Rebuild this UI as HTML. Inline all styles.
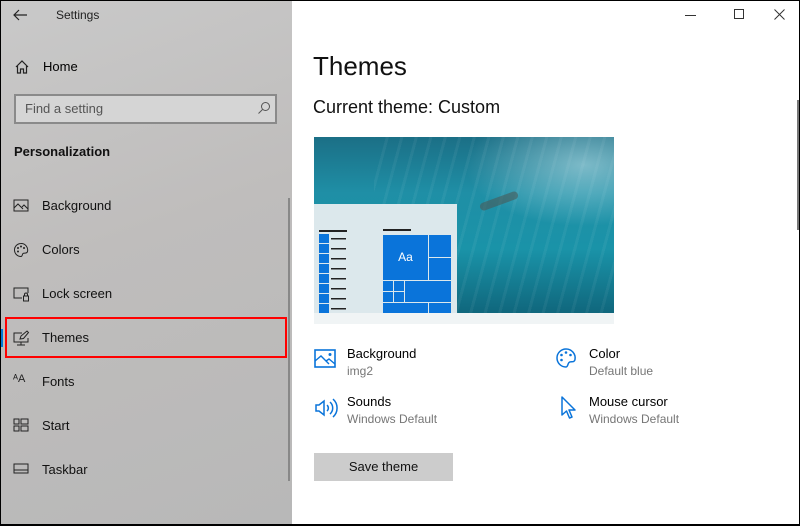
<!DOCTYPE html>
<html><head><meta charset="utf-8"><style>
*{margin:0;padding:0;box-sizing:border-box}
body{width:800px;height:526px;overflow:hidden;font-family:"Liberation Sans",sans-serif;position:relative;background:#fff}
.frame{position:absolute;inset:0;border:1px solid #000;border-bottom:2px solid #000;z-index:10;pointer-events:none}
.side{position:absolute;left:0;top:0;width:292px;height:526px;background:linear-gradient(160deg,#c9c9c9,#bfbdbc 45%,#b8b8b8)}
.t{position:absolute;white-space:nowrap;color:#000}
.item{position:absolute;left:42px;font-size:13px;color:#111}
.ic{position:absolute;left:13px}
.t.sub{color:#767676;font-size:12px}
</style></head><body>
<div class="side">
  <svg class="ic" style="left:12px;top:8px" width="16" height="14" viewBox="0 0 16 14"><path d="M15 7H2M7 2L2 7l5 5" stroke="#222" stroke-width="1.2" fill="none"/></svg>
  <div class="t" style="left:56px;top:8px;font-size:12px;color:#222">Settings</div>
  <svg class="ic" style="left:14px;top:59px" width="16" height="16" viewBox="0 0 16 16"><path d="M2 8L8 2l6 6M3.5 7v7h3v-4h3v4h3V7" stroke="#222" stroke-width="1.2" fill="none"/></svg>
  <div class="t" style="left:43px;top:59px;font-size:13px">Home</div>
  <div style="position:absolute;left:14px;top:94px;width:263px;height:30px;border:2px solid #8a8a8a;background:#d5d5d5"></div>
  <div class="t" style="left:25px;top:101px;font-size:13px;color:#555">Find a setting</div>
  <svg style="position:absolute;left:257px;top:101px" width="14" height="14" viewBox="0 0 14 14"><circle cx="8.5" cy="5.5" r="4" stroke="#555" fill="none"/><path d="M5.5 8.5L1.5 12.5" stroke="#555"/></svg>
  <div class="t" style="left:14px;top:144px;font-size:13px;font-weight:bold;color:#111">Personalization</div>

  <svg class="ic" style="top:199px" width="16" height="14" viewBox="0 0 16 14"><rect x="1" y="1" width="14" height="11" stroke="#222" fill="none"/><path d="M1 9l4-4 5 5M9 8l2-2 4 4" stroke="#222" fill="none"/></svg>
  <div class="item" style="top:198px">Background</div>
  <svg class="ic" style="top:242px" width="16" height="16" viewBox="0 0 16 16"><path d="M8 1.5a6.5 6.5 0 1 0 0 13c1.5 0 1-2 2-3s4 .5 4.5-2A6.5 6.5 0 0 0 8 1.5z" stroke="#222" fill="none"/><circle cx="5" cy="6" r="1" fill="#222"/><circle cx="8" cy="4.5" r="1" fill="#222"/><circle cx="11" cy="6" r="1" fill="#222"/><circle cx="5" cy="9.5" r="1" fill="#222"/></svg>
  <div class="item" style="top:242px">Colors</div>
  <svg class="ic" style="top:286px" width="17" height="16" viewBox="0 0 17 16"><path d="M9 12H1V2h14v5" stroke="#222" fill="none"/><rect x="10.5" y="10" width="5" height="5" stroke="#222" fill="none"/><path d="M11.5 10V8.5a1.5 1.5 0 0 1 3 0V10" stroke="#222" fill="none"/></svg>
  <div class="item" style="top:286px">Lock screen</div>
  <div style="position:absolute;left:1px;top:329px;width:2px;height:18px;background:#0078d7"></div>
  <svg class="ic" style="top:330px" width="17" height="16" viewBox="0 0 17 16"><path d="M9 3H1v9h14V8M4 15h8M8 12v3" stroke="#222" fill="none"/><path d="M7 9l1-3 6-5 1.5 1.5-5 6z" stroke="#222" fill="none"/></svg>
  <div class="item" style="top:330px">Themes</div>
  <div class="t" style="left:13px;top:373px;font-size:11px;color:#222">ᴬA</div>
  <div class="item" style="top:374px">Fonts</div>
  <svg class="ic" style="top:418px" width="16" height="14" viewBox="0 0 16 14"><rect x="1" y="1" width="5" height="5" stroke="#222" fill="none"/><rect x="8" y="1" width="7" height="5" stroke="#222" fill="none"/><rect x="1" y="8" width="5" height="5" stroke="#222" fill="none"/><rect x="8" y="8" width="7" height="5" stroke="#222" fill="none"/></svg>
  <div class="item" style="top:418px">Start</div>
  <svg class="ic" style="top:463px" width="16" height="12" viewBox="0 0 16 12"><rect x="1" y="1" width="14" height="9" stroke="#222" fill="none"/><path d="M1 7h14" stroke="#222"/></svg>
  <div class="item" style="top:462px">Taskbar</div>
  <div style="position:absolute;left:5px;top:317px;width:282px;height:41px;border:2px solid #f00"></div>
  <div style="position:absolute;left:288px;top:198px;width:2px;height:283px;background:#888"></div>
</div>

<div class="main">
  <div style="position:absolute;left:685px;top:15px;width:11px;height:1px;background:#333"></div>
  <div style="position:absolute;left:734px;top:9px;width:10px;height:10px;border:1px solid #333"></div>
  <svg style="position:absolute;left:774px;top:9px" width="11" height="11" viewBox="0 0 11 11"><path d="M0.5 0.5l10 10M10.5 0.5l-10 10" stroke="#333"/></svg>
  <div style="position:absolute;left:797px;top:100px;width:2px;height:130px;background:#777"></div>

  <div class="t" style="left:313px;top:51px;font-size:26px;color:#111">Themes</div>
  <div class="t" style="left:313px;top:97px;font-size:18px;color:#111">Current theme: Custom</div>

  <div style="position:absolute;left:314px;top:137px;width:300px;height:187px;overflow:hidden;background:linear-gradient(180deg,#1b6f86 0%,#1f8fa6 30%,#1a93a8 60%,#0e5f75 100%)">
    <div style="position:absolute;left:60px;top:-10px;width:260px;height:200px;background:repeating-linear-gradient(105deg,rgba(255,255,255,.05) 0 3px,transparent 3px 14px)"></div>
    <div style="position:absolute;left:130px;top:-20px;width:200px;height:120px;background:radial-gradient(ellipse at 70% 40%,rgba(220,245,250,.5),rgba(255,255,255,0) 60%)"></div>
    <div style="position:absolute;left:165px;top:60px;width:40px;height:8px;background:#4a5a58;transform:rotate(-20deg);border-radius:4px;opacity:.6"></div>
    <div style="position:absolute;left:0;top:176px;width:300px;height:11px;background:#f0f4f5"></div>
    <div style="position:absolute;left:0;top:67px;width:143px;height:109px;background:#dce8ec">
      <div style="position:absolute;left:5px;top:26px;width:28px;height:2px;background:#222"></div>
      <div style="position:absolute;left:69px;top:25px;width:28px;height:2px;background:#222"></div>
      <div style="position:absolute;left:5px;top:30px;width:10px;height:79px;background:repeating-linear-gradient(#0a74da 0 9px,#dce8ec 9px 10px)"></div>
      <div style="position:absolute;left:17px;top:34px;width:15px;height:72px;background:repeating-linear-gradient(#222 0 1.5px,transparent 1.5px 10px)"></div>
      <div style="position:absolute;left:69px;top:31px;width:45px;height:45px;background:#0a74da;color:#fff;font-size:12px;text-align:center;line-height:45px">Aa</div>
      <div style="position:absolute;left:115px;top:31px;width:22px;height:22px;background:#0a74da"></div>
      <div style="position:absolute;left:115px;top:54px;width:22px;height:22px;background:#0a74da"></div>
      <div style="position:absolute;left:69px;top:77px;width:10px;height:10px;background:#0a74da"></div>
      <div style="position:absolute;left:80px;top:77px;width:10px;height:10px;background:#0a74da"></div>
      <div style="position:absolute;left:69px;top:88px;width:10px;height:10px;background:#0a74da"></div>
      <div style="position:absolute;left:80px;top:88px;width:10px;height:10px;background:#0a74da"></div>
      <div style="position:absolute;left:91px;top:77px;width:46px;height:21px;background:#0a74da"></div>
      <div style="position:absolute;left:69px;top:99px;width:45px;height:10px;background:#0a74da"></div>
      <div style="position:absolute;left:115px;top:99px;width:22px;height:10px;background:#0a74da"></div>
    </div>
  </div>

  <svg style="position:absolute;left:314px;top:349px" width="22" height="20" viewBox="0 0 22 20"><rect x="1" y="1" width="20" height="17" stroke="#0a74da" stroke-width="1.6" fill="none"/><path d="M1 12l6-5 8 8M12 12l3-2 6 5" stroke="#0a74da" stroke-width="1.4" fill="none"/><circle cx="16" cy="5.5" r="1.5" fill="#0a74da"/></svg>
  <div class="t" style="left:347px;top:346px;font-size:13px">Background</div>
  <div class="t sub" style="left:347px;top:364px">img2</div>
  <svg style="position:absolute;left:555px;top:347px" width="22" height="22" viewBox="0 0 22 22"><path d="M11 2a9 9 0 1 0 0 18c2 0 1.5-3 3-4.5s5.5.5 6-3A9 9 0 0 0 11 2z" stroke="#0a74da" stroke-width="1.5" fill="none"/><circle cx="6.5" cy="8" r="1.3" fill="#0a74da"/><circle cx="11" cy="5.5" r="1.3" fill="#0a74da"/><circle cx="15.5" cy="8" r="1.3" fill="#0a74da"/><circle cx="6.5" cy="13" r="1.3" fill="#0a74da"/></svg>
  <div class="t" style="left:589px;top:346px;font-size:13px">Color</div>
  <div class="t sub" style="left:589px;top:364px">Default blue</div>
  <svg style="position:absolute;left:314px;top:397px" width="24" height="22" viewBox="0 0 24 22"><path d="M2 8h3l5-4v14l-5-4H2z" stroke="#0a74da" stroke-width="1.5" fill="none"/><path d="M13 8a4 4 0 0 1 0 6M16 5a8 8 0 0 1 0 12M19 2a12 12 0 0 1 0 18" stroke="#0a74da" stroke-width="1.5" fill="none"/></svg>
  <div class="t" style="left:347px;top:394px;font-size:13px">Sounds</div>
  <div class="t sub" style="left:347px;top:412px">Windows Default</div>
  <svg style="position:absolute;left:560px;top:396px" width="18" height="24" viewBox="0 0 18 24"><path d="M2 1v18l4.5-4 3 7 2.5-1-3-7H15z" stroke="#0a74da" stroke-width="1.5" fill="none" stroke-linejoin="round"/></svg>
  <div class="t" style="left:589px;top:394px;font-size:13px">Mouse cursor</div>
  <div class="t sub" style="left:589px;top:412px">Windows Default</div>

  <div style="position:absolute;left:314px;top:453px;width:139px;height:28px;background:#cccccc;font-size:13px;text-align:center;line-height:28px;color:#111">Save theme</div>
</div>
<div class="frame"></div>
</body></html>
